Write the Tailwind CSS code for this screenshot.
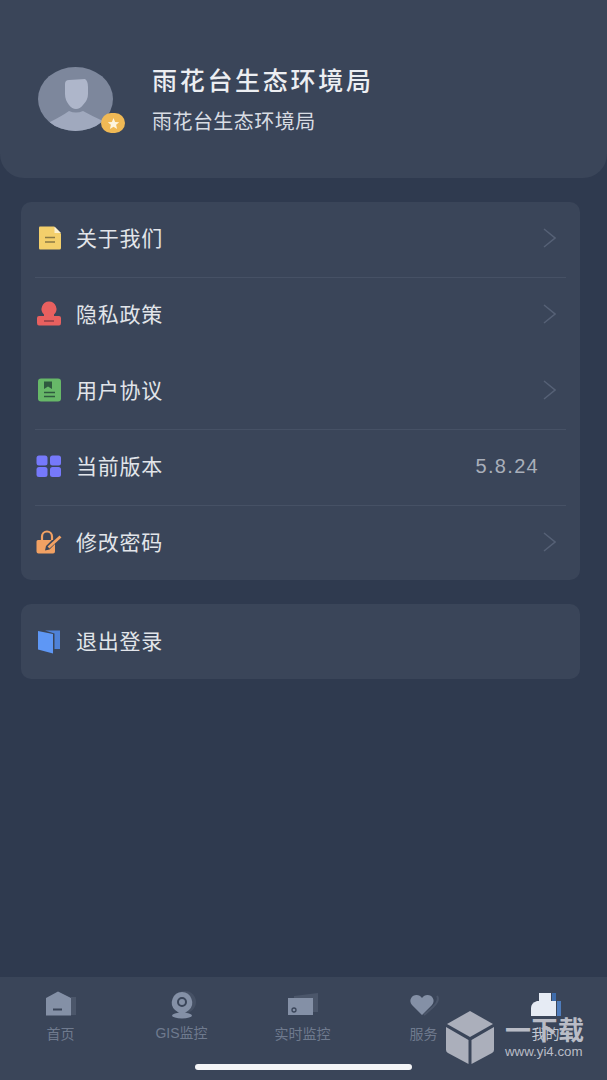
<!DOCTYPE html>
<html lang="zh">
<head>
  <meta charset="UTF-8">
  <title>我的</title>
  <meta name="viewport" content="width=device-width, initial-scale=1.0" />
  <script src="https://cdn.jsdelivr.net/npm/@tailwindcss/browser@4"></script>
</head>
<body class="bg-[#2f3a4f] font-['Noto_Sans_CJK_SC','Noto_Sans',sans-serif] text-[#e2e5ea]">
  <div class="relative w-[607px] h-[1080px] overflow-hidden flex flex-col">

    <!-- header -->
    <div class="h-[178px] shrink-0 bg-[#3a4559] rounded-b-[24px] flex pl-[38px] pt-[67px]">
      <div class="relative w-[75px] h-[64px] shrink-0">
        <svg class="w-[75px] h-[64px] block" viewBox="0 0 75 64">
          <defs><clipPath id="av"><ellipse cx="37.500" cy="32" rx="37.500" ry="32"/></clipPath></defs>
          <g clip-path="url(#av)">
            <rect width="75" height="64" fill="#7d879c"/>
            <path d="M27 17 Q27 13 31 13 L47 12 Q50 14 50 20 L50 27 Q50 33 45 38 Q42 42 38 42 Q34 42 31 38 Q27 33 27 27Z" fill="#aeb6ca"/>
            <path d="M12 55 Q24 49 31 44 Q38 47 45 44 Q54 49 65 54 L70 64 L8 64Z" fill="#a0a9be"/>
          </g>
        </svg>
        <div class="absolute left-[63px] top-[46px] w-[24px] h-[20px] rounded-full bg-[#f0b955] flex items-center justify-center">
          <svg class="w-[15px] h-[13px]" viewBox="0 0 24 24"><path d="M12 2l3 7 7.500.6-5.700 4.900 1.800 7.500L12 18l-6.600 4 1.800-7.500L1.500 9.600 9 9z" fill="#fdf4df"/></svg>
        </div>
      </div>
      <div class="ml-[39px] flex flex-col">
        <div class="text-[25px] font-medium leading-[28px] tracking-[2.7px] whitespace-nowrap -mt-[2px] text-[#eceef2]">雨花台生态环境局</div>
        <div class="text-[20px] leading-[24px] tracking-[0.45px] whitespace-nowrap mt-[16px] text-[#d8dce3]">雨花台生态环境局</div>
      </div>
    </div>

    <!-- menu -->
    <div class="mx-[21px] mt-[24px] w-[559px] bg-[#3a4559] rounded-[10px] flex flex-col">
      <div class="h-[75px] flex items-center pl-[15px] pr-[24px] pb-[3px]">
        <svg class="w-[26px] h-[26px] shrink-0" viewBox="0 0 26 26">
          <path d="M4 1.500 H18 L25 8.500 V23 Q25 24.500 23.500 24.500 H4 Q3 24.500 3 23 V2.500 Q3 1.500 4 1.500Z" fill="#f3cf6b"/>
          <path d="M18.500 1.500 L25 8 H18.500Z" fill="#fbf0cf"/>
          <path d="M9 12.500 H19 M9 17 H19" stroke="#8a7a45" stroke-width="1.600"/>
        </svg>
        <span class="ml-[14px] text-[21px] tracking-[0.75px] whitespace-nowrap">关于我们</span>
        <svg class="ml-auto w-[13px] h-[20px]" viewBox="0 0 13 20"><path d="M1 1 L12 10 L1 19" fill="none" stroke="#566176" stroke-width="1.500"/></svg>
      </div>
      <div class="h-px mx-[14px] bg-[#465165]"></div>
      <div class="h-[75px] flex items-center pl-[15px] pr-[24px] pb-[3px]">
        <svg class="w-[26px] h-[26px] shrink-0" viewBox="0 0 26 26">
          <path d="M13 0.500 A7.500 7.500 0 0 1 18 13.500 L18 15 H23 Q25 15 25 17 V22 Q25 24.500 23 24.500 H3 Q1 24.500 1 22 V17 Q1 15 3 15 H8 L8 13.500 A7.500 7.500 0 0 1 13 0.500Z" fill="#e8605f"/>
          <path d="M8 20 H18" stroke="#8f3c44" stroke-width="1.500"/>
        </svg>
        <span class="ml-[14px] text-[21px] tracking-[0.75px] whitespace-nowrap">隐私政策</span>
        <svg class="ml-auto w-[13px] h-[20px]" viewBox="0 0 13 20"><path d="M1 1 L12 10 L1 19" fill="none" stroke="#566176" stroke-width="1.500"/></svg>
      </div>
      <div class="h-[76px] flex items-center pl-[15px] pr-[24px] pb-[3px]">
        <svg class="w-[26px] h-[26px] shrink-0" viewBox="0 0 26 26">
          <rect x="2" y="1.500" width="23" height="23" rx="3" fill="#67b868"/>
          <path d="M8 4.500 H16 V12 L12 9.500 L8 12Z" fill="#2f5a3f"/>
          <path d="M8 15.500 H19 M8 19.500 H19" stroke="#2f5a3f" stroke-width="1.600"/>
        </svg>
        <span class="ml-[14px] text-[21px] tracking-[0.75px] whitespace-nowrap">用户协议</span>
        <svg class="ml-auto w-[13px] h-[20px]" viewBox="0 0 13 20"><path d="M1 1 L12 10 L1 19" fill="none" stroke="#566176" stroke-width="1.500"/></svg>
      </div>
      <div class="h-px mx-[14px] bg-[#465165]"></div>
      <div class="h-[75px] flex items-center pl-[15px] pr-[41px] pb-[3px]">
        <svg class="w-[26px] h-[26px] shrink-0" viewBox="0 0 26 26">
          <rect x="0.500" y="2.500" width="11" height="10" rx="2.500" fill="#7679fb"/>
          <rect x="14" y="2.500" width="11" height="10" rx="2.500" fill="#7679fb"/>
          <rect x="0.500" y="14" width="11" height="10" rx="2.500" fill="#7679fb"/>
          <rect x="14" y="14" width="11" height="10" rx="2.500" fill="#7679fb"/>
        </svg>
        <span class="ml-[14px] text-[21px] tracking-[0.75px] whitespace-nowrap">当前版本</span>
        <span class="ml-auto font-['Liberation_Sans',sans-serif] text-[20px] tracking-[1.3px] text-[#a9afba]">5.8.24</span>
      </div>
      <div class="h-px mx-[14px] bg-[#465165]"></div>
      <div class="h-[74px] flex items-center pl-[15px] pr-[24px] pb-[2px]">
        <svg class="w-[26px] h-[26px] shrink-0" viewBox="0 0 26 26">
          <path d="M6 11 V7.500 A5 5 0 0 1 16 7.500 V11" fill="none" stroke="#f2a163" stroke-width="2.200"/>
          <path d="M2 11 Q0.500 11 0.500 12.500 V22.500 Q0.500 24.500 2.500 24.500 H17 Q19 24.500 19 22.500 V15 L13.500 20.500 L9 21.500 L10 17 L16 11Z" fill="#f2a163"/>
          <path d="M12.500 18.500 L24.500 7.500" stroke="#f2a163" stroke-width="2.800"/>
        </svg>
        <span class="ml-[14px] text-[21px] tracking-[0.75px] whitespace-nowrap">修改密码</span>
        <svg class="ml-auto w-[13px] h-[20px]" viewBox="0 0 13 20"><path d="M1 1 L12 10 L1 19" fill="none" stroke="#566176" stroke-width="1.500"/></svg>
      </div>
    </div>

    <div class="mx-[21px] mt-[24px] w-[559px] h-[75px] bg-[#3a4559] rounded-[10px] flex items-center pl-[15px] pb-[1px]">
      <svg class="w-[26px] h-[26px] shrink-0" viewBox="0 0 26 26">
        <path d="M2 3 L17 6 V25.500 L2 21.500Z" fill="#5e97f5"/>
        <path d="M9 2.500 H24 V21 H18.500 V5.500Z" fill="#4f82d8"/>
      </svg>
      <span class="ml-[14px] text-[21px] tracking-[0.75px] whitespace-nowrap">退出登录</span>
    </div>

    <!-- tab bar -->
    <div class="mt-auto h-[103px] shrink-0 bg-[#3a4559] flex pt-[14px] text-[14px] text-[#6f7a8e]">
      <div class="w-[121px] flex flex-col items-center">
        <svg class="w-[34px] h-[26px]" viewBox="0 0 34 26">
          <path d="M27 6 H32 V24 H27Z" fill="#4b566a"/>
          <path d="M2 7 L14 0.500 L27 7 V24.500 H2Z" fill="#8490a6"/>
          <path d="M9 18.500 H18" stroke="#3a4559" stroke-width="2"/>
        </svg>
        <span class="mt-[7px] leading-[18px]">首页</span>
      </div>
      <div class="w-[121px] flex flex-col items-center">
        <svg class="w-[34px] h-[28px]" viewBox="0 0 34 28">
          <circle cx="20" cy="11" r="11" fill="#465165"/>
          <path d="M17 1 A10.500 10.500 0 0 1 24 19 L17 24 L10 19 A10.500 10.500 0 0 1 17 1Z" fill="#8490a6"/>
          <circle cx="17" cy="11" r="4" fill="none" stroke="#3a4559" stroke-width="2"/>
          <ellipse cx="17" cy="24.500" rx="10" ry="3" fill="#8490a6"/>
        </svg>
        <span class="mt-[5px] leading-[18px] font-['Liberation_Sans','Noto_Sans_CJK_SC',sans-serif]">GIS监控</span>
      </div>
      <div class="w-[121px] flex flex-col items-center">
        <svg class="w-[34px] h-[28px]" viewBox="0 0 34 28">
          <path d="M8 5 L32 2 V21 H8Z" fill="#4b566a"/>
          <rect x="2" y="7" width="25" height="17" fill="#8490a6"/>
          <circle cx="8" cy="19" r="2" fill="none" stroke="#3a4559" stroke-width="1.300"/>
        </svg>
        <span class="mt-[5px] leading-[18px]">实时监控</span>
      </div>
      <div class="w-[121px] flex flex-col items-center">
        <svg class="w-[34px] h-[28px]" viewBox="0 0 34 28">
          <path d="M17 24 L26 16 Q33 9 30 5" fill="none" stroke="#4b566a" stroke-width="2"/>
          <path d="M15 24 L5 14 C1 9 5 4 9.500 4 Q13 4 15 7 Q17 4 20.500 4 C25 4 29 9 25 14Z" fill="#8490a6"/>
        </svg>
        <span class="mt-[5px] leading-[18px]">服务</span>
      </div>
      <div class="w-[123px] flex flex-col items-center">
        <svg class="w-[34px] h-[28px]" viewBox="0 0 34 28">
          <rect x="10" y="2" width="12" height="8" fill="#e6ebf4"/>
          <rect x="23" y="2" width="4" height="8" fill="#3f6cab"/>
          <path d="M8 10 H27 V25 H2 V17 Q2 12 8 10Z" fill="#e6ebf4"/>
          <rect x="28" y="10" width="4" height="15" fill="#4f7dbd"/>
        </svg>
        <span class="mt-[5px] leading-[18px] text-[#c3c8d2]">我的</span>
      </div>
    </div>

    <!-- home indicator -->
    <div class="absolute left-[195px] top-[1064px] w-[217px] h-[6px] rounded-full bg-[#f4f5f7]"></div>

    <!-- watermark -->
    <div class="absolute left-[446px] top-[1011px] flex">
      <svg class="w-[48px] h-[53px] shrink-0" viewBox="0 0 48 53">
        <path d="M24 0 L47 13 L24 26 L1 13Z" fill="#abafbb"/>
        <path d="M0 16 L22.500 29 V53 L2 42 Q0 41 0 39Z" fill="#abafbb"/>
        <path d="M48 16 L25.500 29 V53 L46 42 Q48 41 48 39Z" fill="#abafbb"/>
      </svg>
      <div class="ml-[11px] flex flex-col">
        <div class="text-[26px] leading-[30px] mt-[3px] font-bold tracking-[0.5px] text-[#b9bcc6] whitespace-nowrap">一下载</div>
        <div class="font-['Liberation_Sans',sans-serif] text-[13.300px] leading-[14px] mt-[1px] text-[#b9bcc6] whitespace-nowrap">www.yi4.com</div>
      </div>
    </div>
  </div>
</body>
</html>
